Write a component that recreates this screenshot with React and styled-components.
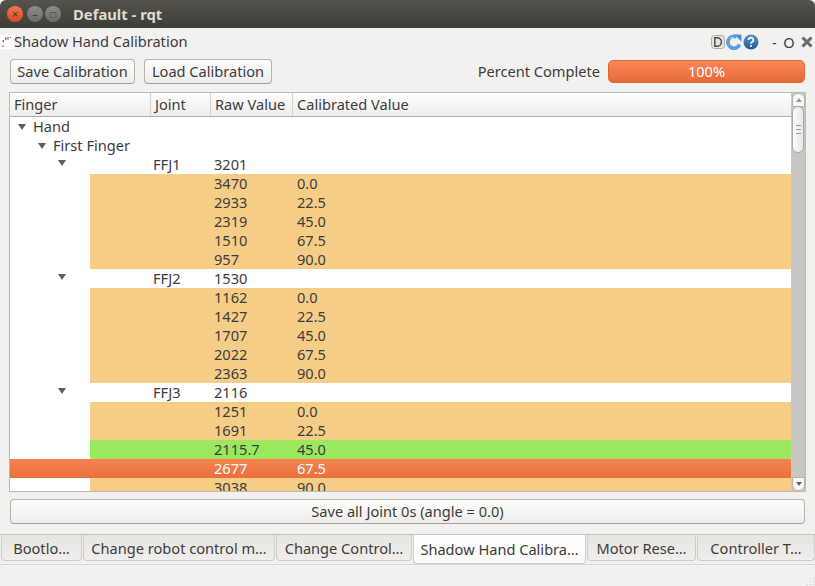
import styled, { createGlobalStyle } from "styled-components";

const GlobalStyle = createGlobalStyle`
html, body { margin: 0; padding: 0; background: #f2f1f0; }
body { font-family: "Noto Sans", "Open Sans", sans-serif; font-size: 14.6px; color: #3c3c3c; }
`;

const Window = styled.div`
width: 815px;
height: 586px;
overflow: hidden;
display: flex;
flex-direction: column;
background: #f2f1f0;
`;

const TitleBar = styled.div`
height: 28px;
flex: none;
display: flex;
align-items: center;
padding-left: 7px;
border-radius: 6px 6px 0 0;
background: linear-gradient(#55534c, #3d3c37);
`;

const Dot = styled.span`
width: 16px;
height: 16px;
margin-right: ${(p) => p.$gap}px;
border-radius: 50%;
display: flex;
align-items: center;
justify-content: center;
font-size: 10px;
line-height: 1;
color: #3a3a36;
background: ${(p) => p.$bg || "linear-gradient(#8c8b85, #6b6a65)"};
`;

const WindowTitle = styled.span`
margin-left: 12px;
font-size: 14.8px;
font-weight: 700;
color: #dfdbd2;
`;

const PluginBar = styled.div`
height: 27px;
flex: none;
display: flex;
align-items: center;
padding-right: 2px;
`;

const PluginTitle = styled.span`
flex: 1;
padding-bottom: 2px;
`;

const PluginIcons = styled.div`
display: flex;
align-items: center;
gap: 1px;
`;

const Controls = styled.div`
display: flex;
align-items: center;
justify-content: space-between;
margin-left: 13px;
width: 41px;
`;

const ToolRow = styled.div`
height: 27px;
margin-top: 3px;
flex: none;
display: flex;
align-items: center;
padding: 0 10px;
`;

const Button = styled.button`
height: 25px;
margin-right: 9px;
padding: 0 0 2px;
width: ${(p) => p.$width}px;
font: inherit;
color: #3c3c3c;
border: 1px solid #b5b2ad;
border-bottom-color: #a3a09b;
border-radius: 4px;
background: linear-gradient(#fdfdfc, #eeedeb);
`;

const PercentLabel = styled.span`
margin-left: auto;
margin-right: 8px;
padding-bottom: 2px;
`;

const Progress = styled.div`
width: 197px;
height: 23px;
box-sizing: border-box;
display: flex;
align-items: center;
justify-content: center;
padding-bottom: 2px;
color: #fff;
border: 1px solid #d9673a;
border-radius: 5px;
background: linear-gradient(#fa8658, #e8693a);
`;

const Table = styled.div`
margin: 7px 9px 0 9px;
height: 400px;
flex: none;
box-sizing: border-box;
border: 1px solid #bdbab5;
display: flex;
background: #fff;
overflow: hidden;
`;

const TableMain = styled.div`
flex: 1;
min-width: 0;
display: flex;
flex-direction: column;
`;

const Header = styled.div`
height: 24px;
flex: none;
box-sizing: border-box;
display: grid;
grid-template-columns: 141px 60px 82px 1fr;
border-bottom: 1px solid #b0ada8;
background: linear-gradient(#fdfdfd, #efeeec);
`;

const HeaderCell = styled.div`
display: flex;
align-items: center;
padding: 0 0 2px 4px;
border-right: 1px solid #d5d3cf;
&:last-child { border-right: none; }
`;

const Body = styled.div`
flex: 1;
min-height: 0;
overflow: hidden;
`;

const Row = styled.div`
height: 19px;
line-height: 19px;
display: grid;
grid-template-columns: 139px 61px 83px 1fr;
white-space: nowrap;
`;

const TreeCell = styled.div`
display: flex;
align-items: center;
padding-left: ${(p) => p.$indent}px;
`;

const Arrow = styled.span`
width: 0;
height: 0;
margin-right: 7px;
border-left: 4px solid transparent;
border-right: 4px solid transparent;
border-top: 6px solid #5d5d5a;
margin-top: ${(p) => p.$up || 0}px;
`;

const Cell = styled.div`
padding-left: 4px;
`;

const ValueRow = styled.div`
height: 19px;
line-height: 19px;
display: grid;
grid-template-columns: 59px 61px 83px 1fr;
margin-left: ${(p) => (p.$hot ? 0 : 80)}px;
padding-left: ${(p) => (p.$hot ? 80 : 0)}px;
box-sizing: border-box;
color: ${(p) => (p.$hot ? "#fff" : "#3c3c3c")};
background: ${(p) =>
    p.$hot
      ? "linear-gradient(#f6824f, #ea6f3d)"
      : p.$done
        ? "#9be85f"
        : "#f6cd86"};
`;

const Scrollbar = styled.div`
width: 13px;
flex: none;
position: relative;
border-left: 1px solid #c9c7c3;
background: #c8c6c2;
display: flex;
flex-direction: column;
justify-content: space-between;
`;

const ScrollEnd = styled.div`
height: 14px;
box-sizing: border-box;
display: flex;
align-items: center;
justify-content: center;
background: #f8f8f7;
border: 1px solid #b3b1ac;
border-radius: ${(p) => (p.$down ? "0 0 6px 6px" : "6px 6px 0 0")};
&::after {
  content: "";
  border-left: 3px solid transparent;
  border-right: 3px solid transparent;
  ${(p) => (p.$down ? "border-top: 4px solid #666;" : "border-bottom: 4px solid #999;")}
}
`;

const Thumb = styled.div`
position: absolute;
top: 13px;
left: 0;
width: 12px;
height: 47px;
box-sizing: border-box;
border: 1px solid #aaa8a3;
border-radius: 6px;
background: linear-gradient(90deg, #fafafa, #e9e8e6);
display: flex;
align-items: center;
justify-content: center;
&::after {
  content: "";
  width: 5px;
  height: 7px;
  border-top: 1px solid #999;
  border-bottom: 1px solid #999;
  background: linear-gradient(transparent 3px, #999 3px, #999 4px, transparent 4px);
}
`;

const SaveRow = styled.div`
margin: 7px 10px 0;
flex: none;
`;

const WideButton = styled(Button)`
width: 100%;
margin: 0;
display: block;
`;

const TabBar = styled.div`
margin-top: 10px;
height: 31px;
flex: none;
box-sizing: border-box;
display: flex;
align-items: flex-start;
padding-left: 1px;
border-top: 1px solid #c4c2be;
border-bottom: 1px solid #d9d7d3;
`;

const Tab = styled.div`
width: ${(p) => p.$width}px;
height: ${(p) => (p.$active ? 29 : 26)}px;
margin-right: 1px;
flex: none;
box-sizing: border-box;
display: flex;
align-items: center;
justify-content: center;
white-space: nowrap;
border: 1px solid #cfcdc9;
border-top: none;
border-radius: 0 0 4px 4px;
background: ${(p) =>
    p.$active ? "linear-gradient(#fff, #fafaf9)" : "linear-gradient(#e6e5e2, #efeeec)"};
`;

const StatusBar = styled.div`
flex: 1;
display: flex;
justify-content: flex-end;
align-items: flex-end;
`;

const Icon = styled.svg`
display: block;
flex: none;
`;

const Logo = () => (
  <Icon width="14" height="14" viewBox="0 0 14 14">
    <rect width="14" height="14" fill="#fff" />
    <g stroke="#6b3a8c" strokeWidth="1.2" fill="none">
      <path d="M3 5 L3.5 7" />
      <path d="M5.5 2.5 L6 5" />
      <path d="M8 2 L8 4.5" />
      <path d="M10.5 2 L10.5 3" />
      <path d="M3 10.5 L3 12" />
    </g>
  </Icon>
);

const DebugIcon = () => (
  <Icon width="14" height="16" viewBox="0 0 14 16">
    <rect x="0.5" y="1.5" width="13" height="13" rx="3" fill="#e8e4da" stroke="#aeaba5" />
    <path d="M3.8 3.8 V12.2 H6.2 A4.2 4.2 0 0 0 6.2 3.8 Z" fill="none" stroke="#3f4854" strokeWidth="1.4" />
  </Icon>
);

// thick crescent, the arrow head sits on its upper right end
const RefreshIcon = () => (
  <Icon width="16" height="16" viewBox="0 0 16 16">
    <path d="M13.5 10.5 A6 6 0 1 1 10.5 2.8" fill="none" stroke="#5c9ade" strokeWidth="3.6" />
    <path d="M8 0.5 L15.5 0.5 L15.5 7.5 Z" fill="#4f8fd6" />
    <path d="M4.2 5 A4.6 4.6 0 0 1 7.5 2.8" fill="none" stroke="#a8cdf0" strokeWidth="1.2" />
  </Icon>
);

const HelpIcon = () => (
  <Icon width="16" height="16" viewBox="0 0 16 16">
    <defs>
      <linearGradient id="helpFill" x1="0" y1="0" x2="0" y2="1">
        <stop offset="0" stopColor="#5b93c8" />
        <stop offset="1" stopColor="#1f5a94" />
      </linearGradient>
    </defs>
    <circle cx="8" cy="8" r="7.5" fill="url(#helpFill)" />
    <path d="M5.6 6 A2.4 2.3 0 1 1 8.6 8.2 Q8 8.5 8 9.8" fill="none" stroke="#fff" strokeWidth="1.6" />
    <circle cx="8" cy="12" r="1" fill="#fff" />
  </Icon>
);

const CloseIcon = () => (
  <Icon width="12" height="12" viewBox="0 0 12 12">
    <path d="M1.5 1.5 L10.5 10.5 M10.5 1.5 L1.5 10.5" stroke="#6a6a68" strokeWidth="3" />
  </Icon>
);

const ResizeGrip = () => (
  <Icon width="10" height="10" viewBox="0 0 10 10" fill="#c9c7c3">
    <rect x="8" y="2" width="1" height="1" />
    <rect x="5" y="5" width="1" height="1" />
    <rect x="8" y="5" width="1" height="1" />
    <rect x="2" y="8" width="1" height="1" />
    <rect x="5" y="8" width="1" height="1" />
    <rect x="8" y="8" width="1" height="1" />
  </Icon>
);

const joints = [
  {
    name: "FFJ1",
    raw: "3201",
    values: [["3470", "0.0"], ["2933", "22.5"], ["2319", "45.0"], ["1510", "67.5"], ["957", "90.0"]],
  },
  {
    name: "FFJ2",
    raw: "1530",
    values: [["1162", "0.0"], ["1427", "22.5"], ["1707", "45.0"], ["2022", "67.5"], ["2363", "90.0"]],
  },
  {
    name: "FFJ3",
    raw: "2116",
    values: [
      ["1251", "0.0"],
      ["1691", "22.5"],
      ["2115.7", "45.0", "done"],
      ["2677", "67.5", "hot"],
      ["3038", "90.0"],
    ],
  },
];

const tabs = [
  { label: "Bootlo…", width: 81 },
  { label: "Change robot control m…", width: 192 },
  { label: "Change Control…", width: 136 },
  { label: "Shadow Hand Calibra…", width: 173, active: true },
  { label: "Motor Rese…", width: 109 },
  { label: "Controller T…", width: 118 },
];

export default function App() {
  return (
    <Window>
      <GlobalStyle />
      <TitleBar>
        <Dot $gap={4} $bg="linear-gradient(#f0764a, #d9481f)">×</Dot>
        <Dot $gap={2}>–</Dot>
        <Dot $gap={0}>□</Dot>
        <WindowTitle>Default - rqt</WindowTitle>
      </TitleBar>
      <PluginBar>
        <Logo />
        <PluginTitle>Shadow Hand Calibration</PluginTitle>
        <PluginIcons>
          <DebugIcon />
          <RefreshIcon />
          <HelpIcon />
        </PluginIcons>
        <Controls>
          <span>-</span>
          <span>O</span>
          <CloseIcon />
        </Controls>
      </PluginBar>
      <ToolRow>
        <Button $width={125}>Save Calibration</Button>
        <Button $width={128}>Load Calibration</Button>
        <PercentLabel>Percent Complete</PercentLabel>
        <Progress>100%</Progress>
      </ToolRow>
      <Table>
        <TableMain>
          <Header>
            <HeaderCell>Finger</HeaderCell>
            <HeaderCell>Joint</HeaderCell>
            <HeaderCell>Raw Value</HeaderCell>
            <HeaderCell>Calibrated Value</HeaderCell>
          </Header>
          <Body>
            <Row>
              <TreeCell $indent={8}>
                <Arrow />
                Hand
              </TreeCell>
            </Row>
            <Row>
              <TreeCell $indent={28}>
                <Arrow />
                First Finger
              </TreeCell>
            </Row>
            {joints.map((joint) => (
              <div key={joint.name}>
                <Row>
                  <TreeCell $indent={48}>
                    <Arrow $up={-4} />
                  </TreeCell>
                  <Cell>{joint.name}</Cell>
                  <Cell>{joint.raw}</Cell>
                </Row>
                {joint.values.map(([raw, angle, state]) => (
                  <ValueRow key={raw} $hot={state === "hot"} $done={state === "done"}>
                    <Cell />
                    <Cell />
                    <Cell>{raw}</Cell>
                    <Cell>{angle}</Cell>
                  </ValueRow>
                ))}
              </div>
            ))}
          </Body>
        </TableMain>
        <Scrollbar>
          <ScrollEnd />
          <Thumb />
          <ScrollEnd $down />
        </Scrollbar>
      </Table>
      <SaveRow>
        <WideButton>Save all Joint 0s (angle = 0.0)</WideButton>
      </SaveRow>
      <TabBar>
        {tabs.map((tab) => (
          <Tab key={tab.label} $width={tab.width} $active={tab.active}>
            {tab.label}
          </Tab>
        ))}
      </TabBar>
      <StatusBar>
        <ResizeGrip />
      </StatusBar>
    </Window>
  );
}
